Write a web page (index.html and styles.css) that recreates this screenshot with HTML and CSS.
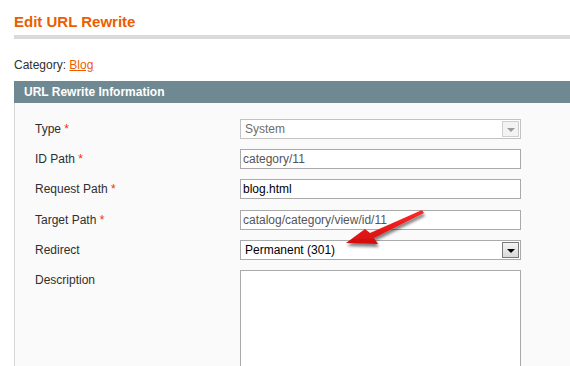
FILE: index.html
```html
<!DOCTYPE html>
<html lang="en">
<head>
    <meta charset="UTF-8">
    <title>Edit URL Rewrite</title>
    <link rel="stylesheet" href="styles.css">
</head>
<body>

    <!-- page title -->
    <div class="content-header">
        <h3>Edit URL Rewrite</h3>
    </div>

    <p class="category">Category: <a href="#">Blog</a></p>

    <!-- fieldset -->
    <div class="entry-edit">
        <div class="entry-head">URL Rewrite Information</div>
        <div class="fieldset">
            <div class="row">
                <label>Type <span class="required">*</span></label>
                <div class="select disabled">
                    <span class="select-value">System</span>
                    <span class="select-btn"><i></i></span>
                </div>
            </div>
            <div class="row">
                <label>ID Path <span class="required">*</span></label>
                <input type="text" class="input-text muted" value="category/11">
            </div>
            <div class="row">
                <label>Request Path <span class="required">*</span></label>
                <input type="text" class="input-text" value="blog.html">
            </div>
            <div class="row">
                <label>Target Path <span class="required">*</span></label>
                <input type="text" class="input-text muted" value="catalog/category/view/id/11">
            </div>
            <div class="row">
                <label>Redirect</label>
                <div class="select">
                    <span class="select-value">Permanent (301)</span>
                    <span class="select-btn"><i></i></span>
                </div>
            </div>
            <div class="row">
                <label>Description</label>
                <textarea class="textarea"></textarea>
            </div>
        </div>
    </div>

    <!-- red arrow drawn over the screenshot -->
    <svg class="arrow" width="570" height="366" viewBox="0 0 570 366">
        <defs>
            <filter id="shadow" x="-20%" y="-20%" width="140%" height="160%">
                <feGaussianBlur in="SourceAlpha" stdDeviation="1.5"/>
                <feOffset dx="1" dy="3" result="blur"/>
                <feComponentTransfer><feFuncA type="linear" slope="0.5"/></feComponentTransfer>
                <feMerge><feMergeNode/><feMergeNode in="SourceGraphic"/></feMerge>
            </filter>
            <linearGradient id="red" x1="0" y1="0" x2="0" y2="1">
                <stop offset="0" stop-color="#ff2a2a"/>
                <stop offset="1" stop-color="#d40d0d"/>
            </linearGradient>
        </defs>
        <polygon filter="url(#shadow)" fill="url(#red)"
            points="346,243 365,229 370,233 422,210 424,213 374,238 378,244"/>
    </svg>

</body>
</html>
```

FILE: styles.css
```css
* {
    box-sizing: border-box;
}

body {
    margin: 0;
    padding: 0 0 0 14px;
    font-family: "Liberation Sans", Arial, sans-serif;
    font-size: 12px;
    color: #2f2f2f;
    background: #fff;
    position: relative;
    overflow: hidden;
    height: 366px;
}

.content-header h3 {
    margin: 0;
    padding: 12px 0 4px;
    font-size: 15px;
    line-height: 19px;
    font-weight: bold;
    color: #eb5e00;
    border-bottom: 4px solid #dadada;
}

.category {
    margin: 19px 0 8px;
    line-height: 15px;
}

.category a {
    color: #eb5e00;
    text-decoration: underline;
}

.entry-head {
    height: 22px;
    line-height: 22px;
    padding-left: 10px;
    background: #6f8992;
    color: #fff;
    font-weight: bold;
}

.fieldset {
    background: #fafafa;
    border-left: 1px solid #d6d6d6;
    padding: 16px 0 0 20px;
    height: 263px;
}

.row {
    display: flex;
    align-items: flex-start;
    margin-bottom: 10px;
}

.row:nth-child(3) {
    margin-bottom: 11px;
}

.row label {
    width: 205px;
    line-height: 20px;
}

.required {
    color: #eb340a;
}

.input-text,
.select,
.textarea {
    width: 281px;
    height: 20px;
    margin: 0;
    border: 1px solid #aaa;
    background: #fff;
    font-family: "Liberation Sans", Arial, sans-serif;
    font-size: 12px;
    color: #000;
}

.input-text {
    padding: 0 2px;
}

.input-text.muted {
    color: #555;
}

.select {
    display: flex;
    align-items: center;
    padding: 1px 1px 1px 4px;
}

.select-value {
    flex: 1;
}

.select-btn {
    width: 17px;
    height: 16px;
    border: 1px solid #7a7a7a;
    background: linear-gradient(#f4f4f4, #d9d9d9);
    display: flex;
    justify-content: center;
    align-items: center;
}

.select-btn i {
    width: 0;
    height: 0;
    border-left: 4px solid transparent;
    border-right: 4px solid transparent;
    border-top: 4px solid #000;
    margin-top: 1px;
}

.select.disabled {
    border-color: #c2c2c2;
    color: #6d6d6d;
}

.select.disabled .select-btn {
    border-color: #cfcfcf;
    background: #f3f3f3;
}

.select.disabled .select-btn i {
    border-top-color: #9a9a9a;
}

.textarea {
    height: 97px;
    resize: none;
}

.arrow {
    position: absolute;
    left: 0;
    top: 0;
    pointer-events: none;
}
```
